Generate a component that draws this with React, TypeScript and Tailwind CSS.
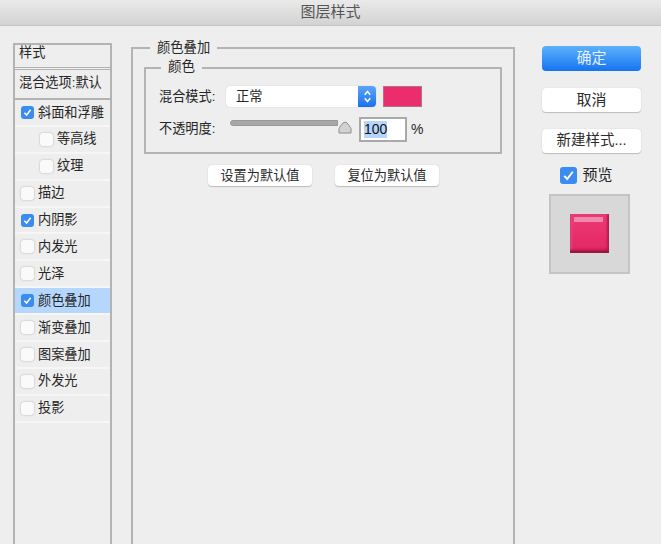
const font = "font-['Liberation_Sans','Noto_Sans_CJK_SC',sans-serif]";

const rows = [
  { label: "斜面和浮雕", checked: true },
  { label: "等高线", nested: true },
  { label: "纹理", nested: true },
  { label: "描边" },
  { label: "内阴影", checked: true },
  { label: "内发光" },
  { label: "光泽" },
  { label: "颜色叠加", checked: true, active: true },
  { label: "渐变叠加" },
  { label: "图案叠加" },
  { label: "外发光" },
  { label: "投影" },
];

function Check({ checked, size = 13 }: { checked?: boolean; size?: number }) {
  if (checked) {
    return (
      <span
        className="flex shrink-0 items-center justify-center rounded-[3px] bg-[#3b8cf0]"
        style={{ width: size, height: size }}
      >
        <svg viewBox="0 0 12 12" width={size - 2} height={size - 2} fill="none">
          <path d="M2.6 6.3 5 8.8 9.4 3" stroke="#fff" strokeWidth="1.6" />
        </svg>
      </span>
    );
  }
  return (
    <span
      className="shrink-0 rounded-[3px] bg-[#fafafa] shadow-[0_0_2px_#a8a8a8]"
      style={{ width: size, height: size }}
    />
  );
}

function PlainButton({ label, className }: { label: string; className: string }) {
  return (
    <button className={`flex items-center justify-center rounded-[4px] bg-white text-[#2c2c2c] shadow-[0_1px_1px_#bdbdbd,0_0_1px_#c4c4c4] ${className}`}>
      {label}
    </button>
  );
}

export default function App() {
  return (
    <div className={`flex h-[544px] w-[661px] flex-col overflow-hidden bg-[#eeeeee] text-[#262626] ${font}`}>
      <div className="flex h-[26px] shrink-0 items-center justify-center border-b border-[#c4c4c4] bg-gradient-to-b from-[#eaeaea] to-[#d3d3d3] text-[15px] text-[#555]">
        图层样式
      </div>

      <div className="flex flex-1 overflow-hidden">
        <div className="ml-[13px] mt-[17px] h-[520px] w-[99px] shrink-0 border-x-2 border-t-2 border-[#b3b3b3] text-[13.2px]">
          <div className="flex h-[25px] items-start border-b-[3px] border-double border-[#b3b3b3] pl-[4px] leading-[16px]">样式</div>
          <div className="flex h-[30px] items-center border-b-2 border-[#b3b3b3] pb-[2px] pl-[4px]">混合选项:默认</div>
          {rows.map((r) => (
            <div
              key={r.label}
              className={`flex h-[26.9px] items-center gap-[4px] border-b-2 ${
                r.active ? "border-[#f6f6f6] bg-[#b5d7fd]" : "border-[#f6f6f6]"
              } ${r.nested ? "pl-[25px]" : "pl-[6px]"}`}
            >
              <Check checked={r.checked} />
              <span>{r.label}</span>
            </div>
          ))}
        </div>

        <div className="ml-[19px] mt-[14px] flex h-[520px] w-[384px] shrink-0 flex-col">
          <fieldset className="flex h-full flex-col border-2 border-[#b3b3b3] pl-[11px] pr-[11px]">
            <legend className="ml-[6px] px-[7px] text-[13.3px] leading-[16px]">颜色叠加</legend>
            <fieldset className="mt-[4px] h-[94px] border-2 border-[#b3b3b3]">
              <legend className="ml-[15px] -translate-y-[1px] px-[7px] text-[13.5px] leading-[16px]">颜色</legend>
              <div className="ml-[13px] mt-[10px] flex items-center text-[13.2px]">
                <span className="w-[67px]">混合模式:</span>
                <div className="flex h-[21px] w-[150px] items-center justify-between rounded-[4px] bg-white pl-[10px] shadow-[0_0_1px_#aaa]">
                  <span>正常</span>
                  <span className="flex h-[21px] w-[18px] items-center justify-center rounded-r-[4px] bg-gradient-to-b from-[#5aa5f7] to-[#1a6fee]">
                    <svg viewBox="0 0 12 18" width="11" height="17" fill="none" stroke="#fff" strokeWidth="1.6">
                      <path d="M3 7 6 3.5 9 7M3 11l3 3.5L9 11" />
                    </svg>
                  </span>
                </div>
                <span className="ml-[7px] h-[21px] w-[39px] border border-[#b0728a] bg-[#ec2d6d]" />
              </div>
              <div className="ml-[13px] mt-[10px] flex items-start text-[13.2px]">
                <span className="mt-[2px] w-[71px]">不透明度:</span>
                <div className="flex w-[129px] items-start">
                  <span className="mt-[3px] h-[6px] w-[108px] rounded-l-full border border-[#999] bg-[#a8a8a8]" />
                  <svg viewBox="0 0 14 14" width="14" height="14" className="mt-[3px]">
                    <path d="M1 13V8.5C1 8 4 4 5 3c1-1 3-1 4 0 1 1 4 5 4 5.500V13z" fill="#d2d2d2" stroke="#8c8c8c" />
                  </svg>
                </div>
                <div className="flex h-[25px] w-[48px] items-center border-2 border-[#a9a9a9] bg-white pl-[3px] text-[14px] text-[#111]">
                  <span className="bg-[#b5d5fb] leading-[17px]">100</span>
                </div>
                <span className="ml-[4px] mt-[2px] text-[14px]">%</span>
              </div>
            </fieldset>
            <div className="ml-[64px] mt-[11px] flex gap-[23px] text-[13.2px]">
              <PlainButton label="设置为默认值" className="h-[21px] w-[104px]" />
              <PlainButton label="复位为默认值" className="h-[21px] w-[104px]" />
            </div>
          </fieldset>
        </div>

        <div className="ml-[27px] mt-[20px] flex w-[99px] shrink-0 flex-col items-center text-[15px]">
          <button className="flex h-[25px] w-[99px] items-center justify-center rounded-[4px] bg-gradient-to-b from-[#5cb0fb] to-[#1473f0] text-[#e4f0fc]">
            确定
          </button>
          <PlainButton label="取消" className="mt-[17px] h-[24px] w-[99px]" />
          <PlainButton label="新建样式..." className="mt-[17px] h-[24px] w-[99px] text-[14.5px]" />
          <div className="mt-[11px] flex items-center gap-[5px] pr-[10px]">
            <Check checked size={17} />
            <span>预览</span>
          </div>
          <div className="mr-[4px] mt-[7px] flex h-[80px] w-[81px] items-center justify-center border-2 border-[#c4c4c4] bg-[#d8d8d8]">
            <div className="relative h-[39px] w-[39px] bg-gradient-to-b from-[#ee3a76] to-[#e22563] shadow-[inset_0_-3px_3px_#99143f,inset_2px_0_2px_#f5558b,inset_-2px_0_2px_#c41e55]">
              <span className="absolute left-[4px] right-[6px] top-[3px] h-[5px] bg-[#f08aac]" />
            </div>
          </div>
        </div>
      </div>
    </div>
  );
}
